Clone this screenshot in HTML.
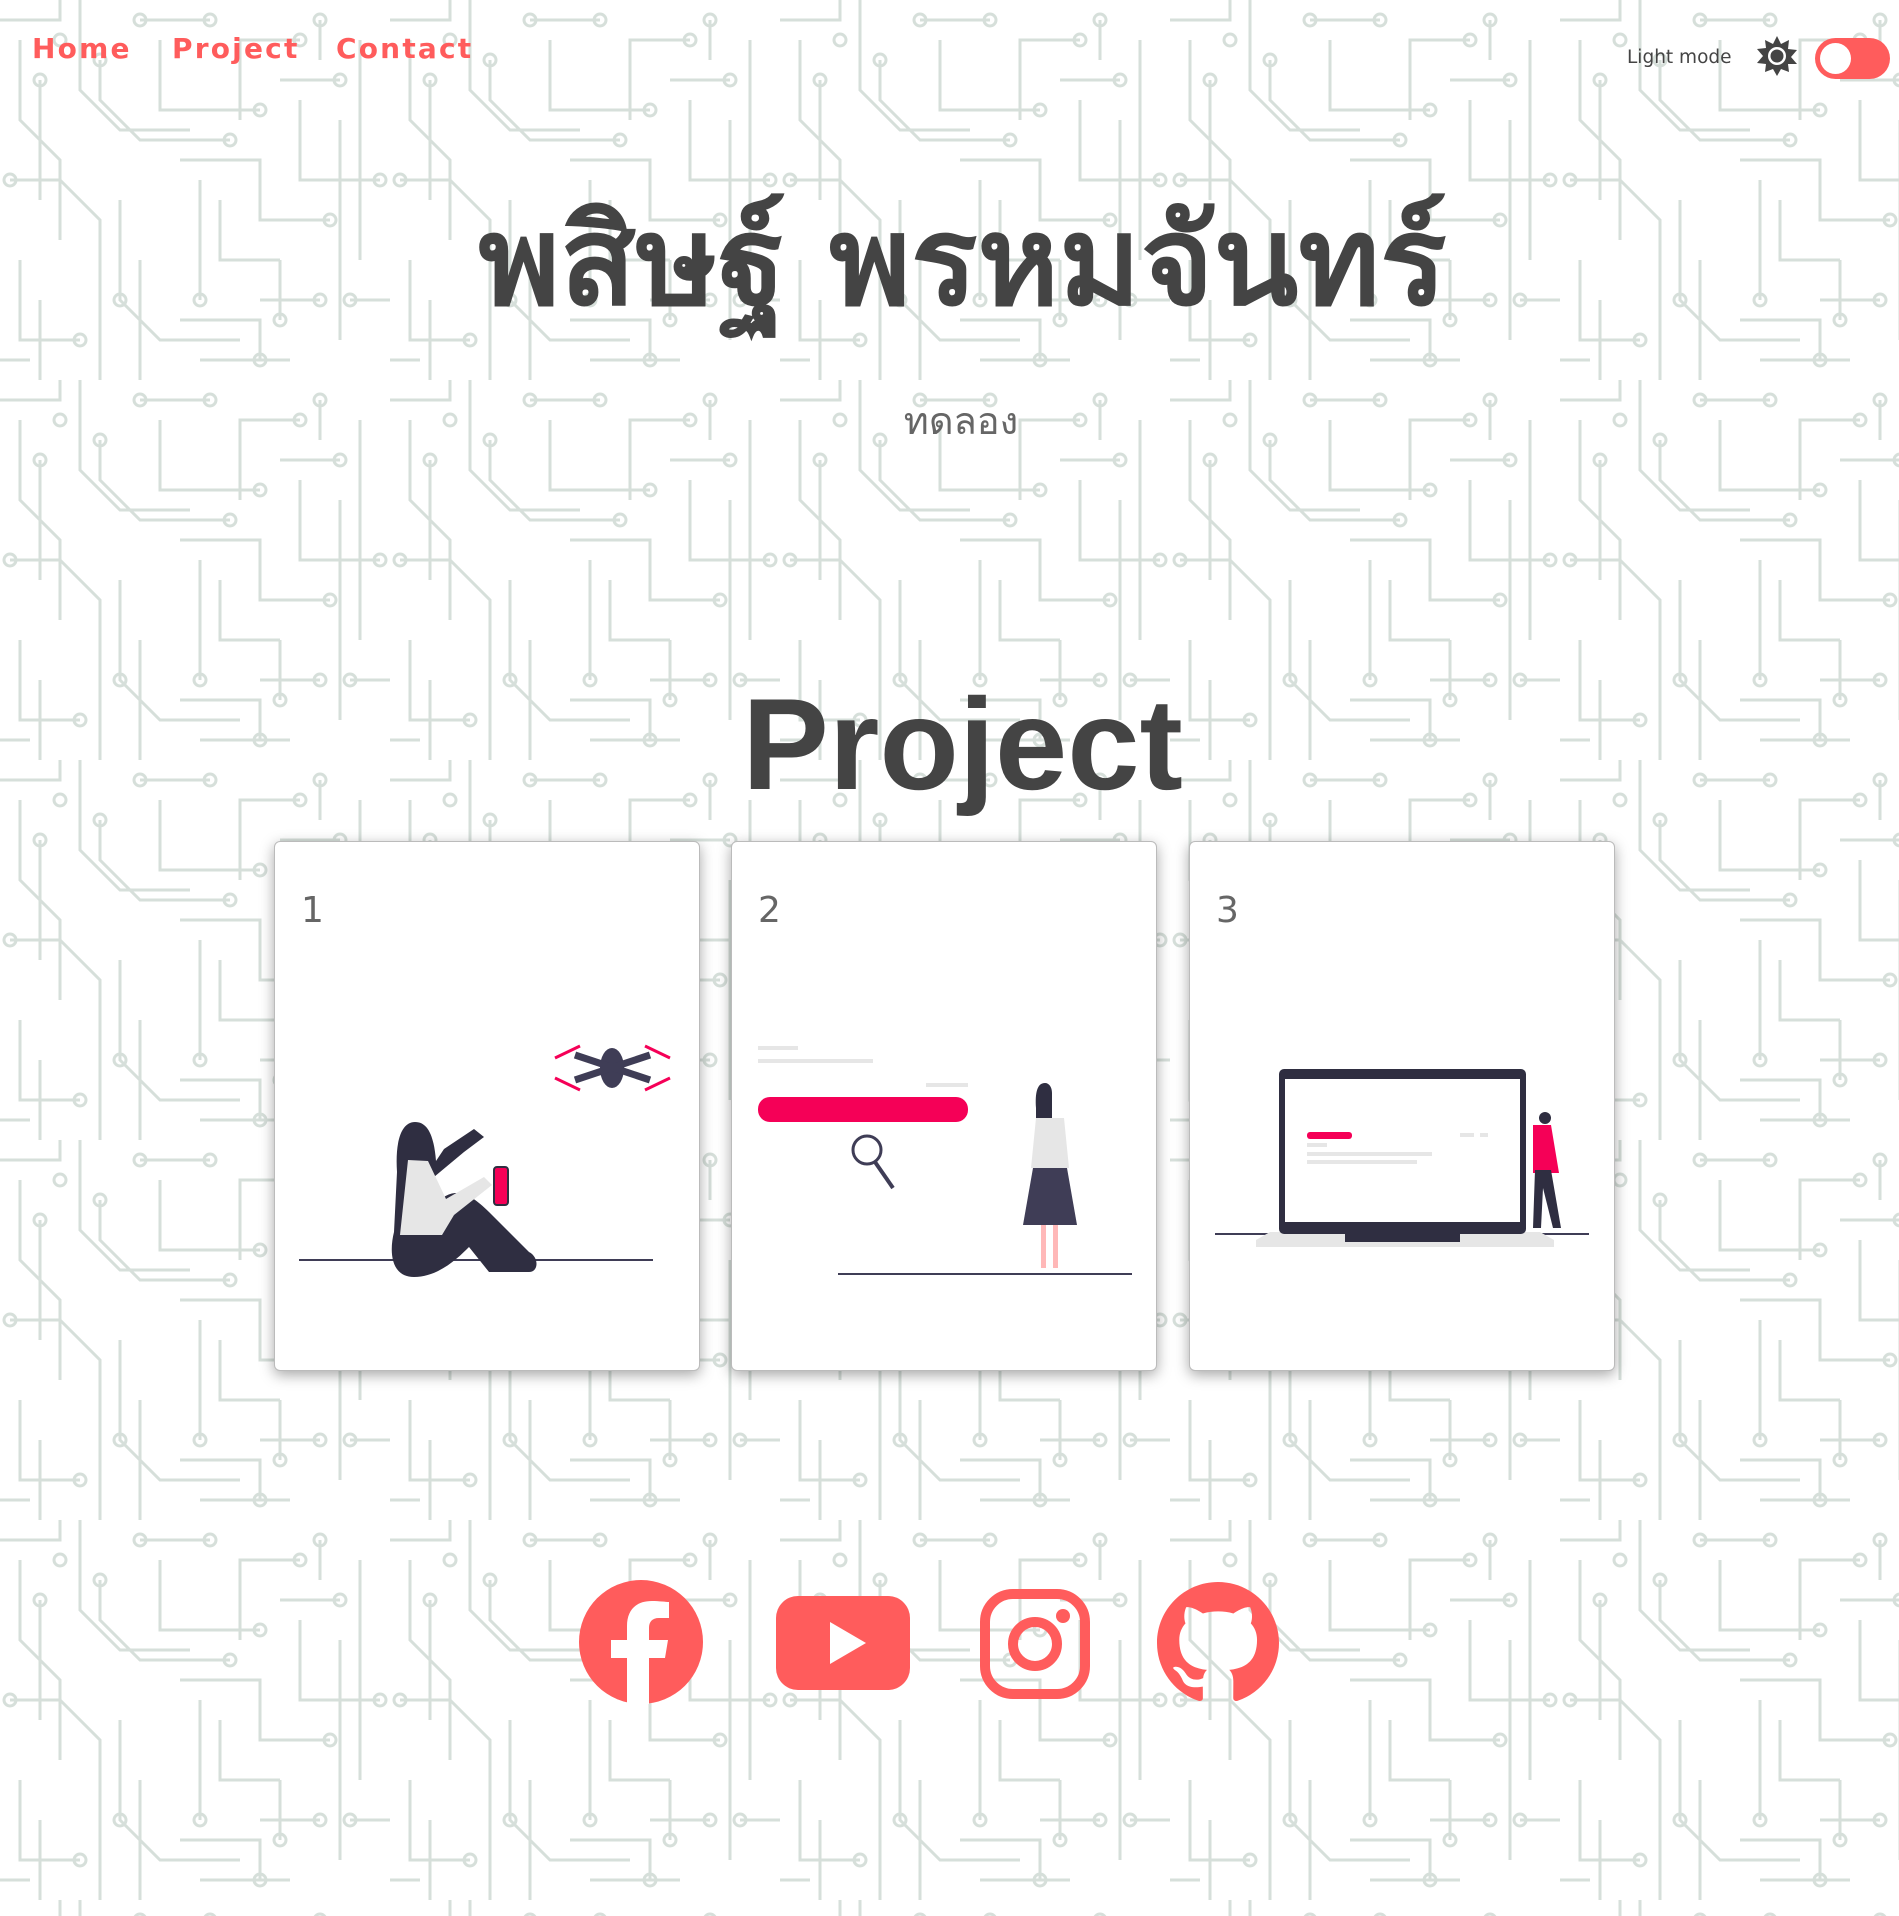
<!DOCTYPE html>
<html><head><meta charset="utf-8"><style>
html,body{margin:0;padding:0}
body{width:1899px;height:1916px;position:relative;overflow:hidden;background:#fff;font-family:"Liberation Sans",sans-serif}
#bg{position:absolute;left:0;top:0}
.nav{position:absolute;top:32px;left:32px;font-size:28px;font-weight:bold;color:#ff5c5c;letter-spacing:2.2px;font-family:"DejaVu Sans","Liberation Sans",sans-serif;white-space:nowrap}
.nav span{position:absolute;top:0}
.lm{position:absolute;left:1627px;top:47px;font-size:18.5px;color:#444;font-family:"DejaVu Sans","Liberation Sans",sans-serif;white-space:nowrap}
.tg{position:absolute;left:1815px;top:38px;width:75px;height:41px;border-radius:21px;background:#ff5c5c}
.tg:after{content:"";position:absolute;left:5px;top:5px;width:31px;height:31px;border-radius:50%;background:#fff}
.t1{position:absolute;left:0;width:1925px;text-align:center;top:162px;font-size:124px;font-weight:bold;color:#444;font-family:"DejaVu Sans","Noto Sans CJK SC",sans-serif;white-space:nowrap}
.t2{position:absolute;left:0;width:1922px;text-align:center;top:390px;font-size:38px;color:#666;font-family:"DejaVu Sans",sans-serif}
.t3{position:absolute;left:0;width:1925px;text-align:center;top:666px;font-size:130px;font-weight:bold;color:#444;font-family:"Liberation Sans",sans-serif;line-height:1.2}
.card{position:absolute;top:841px;width:424px;height:528px;background:#fff;border:1px solid #bbb;border-radius:6px;box-shadow:0 4px 14px rgba(0,0,0,.35)}
.card b{position:absolute;left:26px;top:48px;font-size:36px;font-weight:normal;color:#666;font-family:"DejaVu Sans",sans-serif}
#ov{position:absolute;left:0;top:0}
</style></head><body>
<svg id="bg" width="1899" height="1916">
<defs><pattern id="p" width="390" height="380" patternUnits="userSpaceOnUse">
<g fill="none" stroke="#d6dfda" stroke-width="3">
<path d="M0 20H60V0M20 40V120L60 160V240M40 80V200M80 0V90L120 130H190M100 60V100L140 140H230M140 20H210M160 40V110H260M180 160H260V220H330M200 180V300M220 200V260H280M240 120V40H300M280 80H340M300 100V180H380M320 20V60M340 120V340M360 40V260M10 180H60L100 220V380M120 200V300L160 340H240M140 260V380M180 320H260V360M260 300H320M280 260V320M20 260V340H80M40 300V380M0 360H30M350 300H390M200 360H290"/>
<circle cx="60" cy="40" r="6"/><circle cx="140" cy="20" r="6"/><circle cx="210" cy="20" r="6"/><circle cx="260" cy="110" r="6"/><circle cx="230" cy="140" r="6"/><circle cx="330" cy="220" r="6"/><circle cx="200" cy="300" r="6"/><circle cx="340" cy="80" r="6"/><circle cx="320" cy="20" r="6"/><circle cx="320" cy="300" r="6"/><circle cx="280" cy="320" r="6"/><circle cx="380" cy="180" r="6"/><circle cx="10" cy="180" r="6"/><circle cx="120" cy="300" r="6"/><circle cx="80" cy="340" r="6"/><circle cx="260" cy="360" r="6"/><circle cx="40" cy="80" r="6"/><circle cx="100" cy="60" r="6"/><circle cx="300" cy="40" r="6"/><circle cx="350" cy="300" r="6"/>
</g></pattern></defs>
<rect width="1899" height="1916" fill="url(#p)"/>
</svg>
<div class="nav"><span style="left:0">Home</span><span style="left:140px">Project</span><span style="left:304px">Contact</span></div>
<div class="lm">Light mode</div>
<svg style="position:absolute;left:1757px;top:36px" width="40" height="40" viewBox="0 0 40 40"><polygon fill="#444" points="20,0 24,8 32,4 31,13 40,14 34,21 40,28 31,28 32,36 24,33 20,40 16,33 8,36 9,28 0,27 6,20 0,13 9,12 8,4 16,8"/><circle cx="20" cy="20" r="9" fill="#fff"/><circle cx="20" cy="20" r="6.5" fill="#444"/></svg>
<div class="tg"></div>
<div class="t1">พสิษฐ์ พรหมจันทร์</div>
<div class="t2">ทดลอง</div>
<div class="t3">Project</div>
<div class="card" style="left:274px"><b>1</b></div>
<div class="card" style="left:731px"><b>2</b></div>
<div class="card" style="left:1189px"><b>3</b></div>
<svg id="ov" width="1899" height="1916">
<line x1="299" y1="1260" x2="653" y2="1260" stroke="#3f3d56" stroke-width="2"/>
<path d="M415 1122c-14 0-20 20-18 50l-3 60c-5 20-3 45 20 45 25 0 45-20 55-30l20 25h40c10 0 10-15 0-20l-40-40c-15-15-30-25-45-15l-10-20 30-25 20-15-10-8-30 20-8 12c-2-25-8-39-21-39z" fill="#2f2e41"/>
<path d="M408 1160l-8 75h42l12-20 38-30-8-8-38 22-18-38z" fill="#e6e6e6"/>
<rect x="494" y="1167" width="14" height="38" rx="3" fill="#f50057" stroke="#2f2e41" stroke-width="2"/>
<g fill="#3f3d56"><ellipse cx="612" cy="1068" rx="12" ry="20"/><path d="M575 1055l75 25M575 1080l75-25" stroke="#3f3d56" stroke-width="7"/></g>
<g stroke="#f50057" stroke-width="3"><path d="M555 1058l25-12M645 1046l25 12M555 1078l25 12M645 1090l25-12"/></g>
<g fill="#e6e6e6"><rect x="758" y="1046" width="40" height="4"/><rect x="758" y="1059" width="115" height="4"/><rect x="926" y="1083" width="42" height="4"/></g>
<rect x="758" y="1097" width="210" height="25" rx="12" fill="#f50057"/>
<circle cx="867" cy="1150" r="14" fill="none" stroke="#3f3d56" stroke-width="3"/><line x1="875" y1="1162" x2="893" y2="1188" stroke="#3f3d56" stroke-width="4"/>
<line x1="838" y1="1274" x2="1132" y2="1274" stroke="#3f3d56" stroke-width="2"/>
<path d="M1045 1083c-8 0-10 10-9 25v10h16v-25c0-6-3-10-7-10z" fill="#2f2e41"/>
<path d="M1036 1118h28l5 50h-38z" fill="#e6e6e6"/>
<path d="M1033 1168h34l10 57h-54z" fill="#3f3d56"/>
<path d="M1041 1225h5v43h-5zM1053 1225h5v43h-5z" fill="#ffb8b8"/>
<line x1="1215" y1="1234" x2="1589" y2="1234" stroke="#3f3d56" stroke-width="2"/>
<path d="M1256 1240l14-8h270l14 8v7h-298z" fill="#e6e6e6"/>
<rect x="1279" y="1069" width="247" height="165" rx="5" fill="#2f2e41"/>
<rect x="1285" y="1079" width="235" height="143" fill="#fff"/>
<rect x="1345" y="1234" width="115" height="8" fill="#2f2e41"/>
<rect x="1307" y="1132" width="45" height="7" rx="3" fill="#f50057"/>
<g fill="#e6e6e6"><rect x="1307" y="1143" width="20" height="4"/><rect x="1307" y="1152" width="125" height="4"/><rect x="1307" y="1160" width="110" height="4"/><rect x="1460" y="1133" width="14" height="4"/><rect x="1480" y="1133" width="8" height="4"/></g>
<circle cx="1545" cy="1118" r="6" fill="#2f2e41"/>
<path d="M1533 1125h18l8 48h-26z" fill="#f50057"/>
<path d="M1535 1170h16l10 58h-8l-10-40-2 40h-8z" fill="#2f2e41"/>
</svg>
<svg style="position:absolute;left:579px;top:1580px" width="124" height="124" viewBox="0 0 124 124"><circle cx="62" cy="62" r="62" fill="#ff5c5c"/><path d="M70 124V78h16l3-18H70V48c0-6 3-10 10-10h10V22c-3 0-10-1-17-1-16 0-25 9-25 25v14H32v18h16v46z" fill="#fff"/></svg>
<svg style="position:absolute;left:776px;top:1596px" width="134" height="94" viewBox="0 0 134 94"><rect width="134" height="94" rx="22" fill="#ff5c5c"/><path d="M54 26v42l36-21z" fill="#fff"/></svg>
<svg style="position:absolute;left:980px;top:1589px" width="110" height="110" viewBox="0 0 110 110"><rect x="5" y="5" width="100" height="100" rx="28" fill="none" stroke="#ff5c5c" stroke-width="10"/><circle cx="55" cy="55" r="22" fill="none" stroke="#ff5c5c" stroke-width="10"/><circle cx="83" cy="27" r="7" fill="#ff5c5c"/></svg>
<svg style="position:absolute;left:1157px;top:1582px" width="122" height="122" viewBox="0 0 16 16"><path fill="#ff5c5c" d="M8 0C3.58 0 0 3.580 0 8c0 3.54 2.29 6.53 5.470 7.59.4.07.55-.17.55-.38 0-.19-.01-.82-.01-1.49-2.01.37-2.53-.49-2.690-.94-.09-.23-.48-.94-.82-1.13-.28-.15-.68-.52-.01-.53.63-.01 1.08.58 1.23.82.72 1.21 1.870.87 2.330.66.07-.52.28-.87.51-1.07-1.78-.2-3.64-.89-3.64-3.95 0-.87.31-1.59.82-2.15-.08-.2-.36-1.02.08-2.12 0 0 .67-.21 2.2.82.64-.18 1.32-.27 2-.27.68 0 1.36.09 2 .27 1.53-1.04 2.2-.82 2.2-.82.44 1.1.16 1.92.08 2.12.51.56.82 1.27.82 2.15 0 3.07-1.87 3.75-3.65 3.95.29.25.54.73.54 1.48 0 1.07-.01 1.93-.01 2.2 0 .21.15.46.55.38A8.013 8.013 0 0016 8c0-4.42-3.58-8-8-8z"/></svg>
</body></html>
